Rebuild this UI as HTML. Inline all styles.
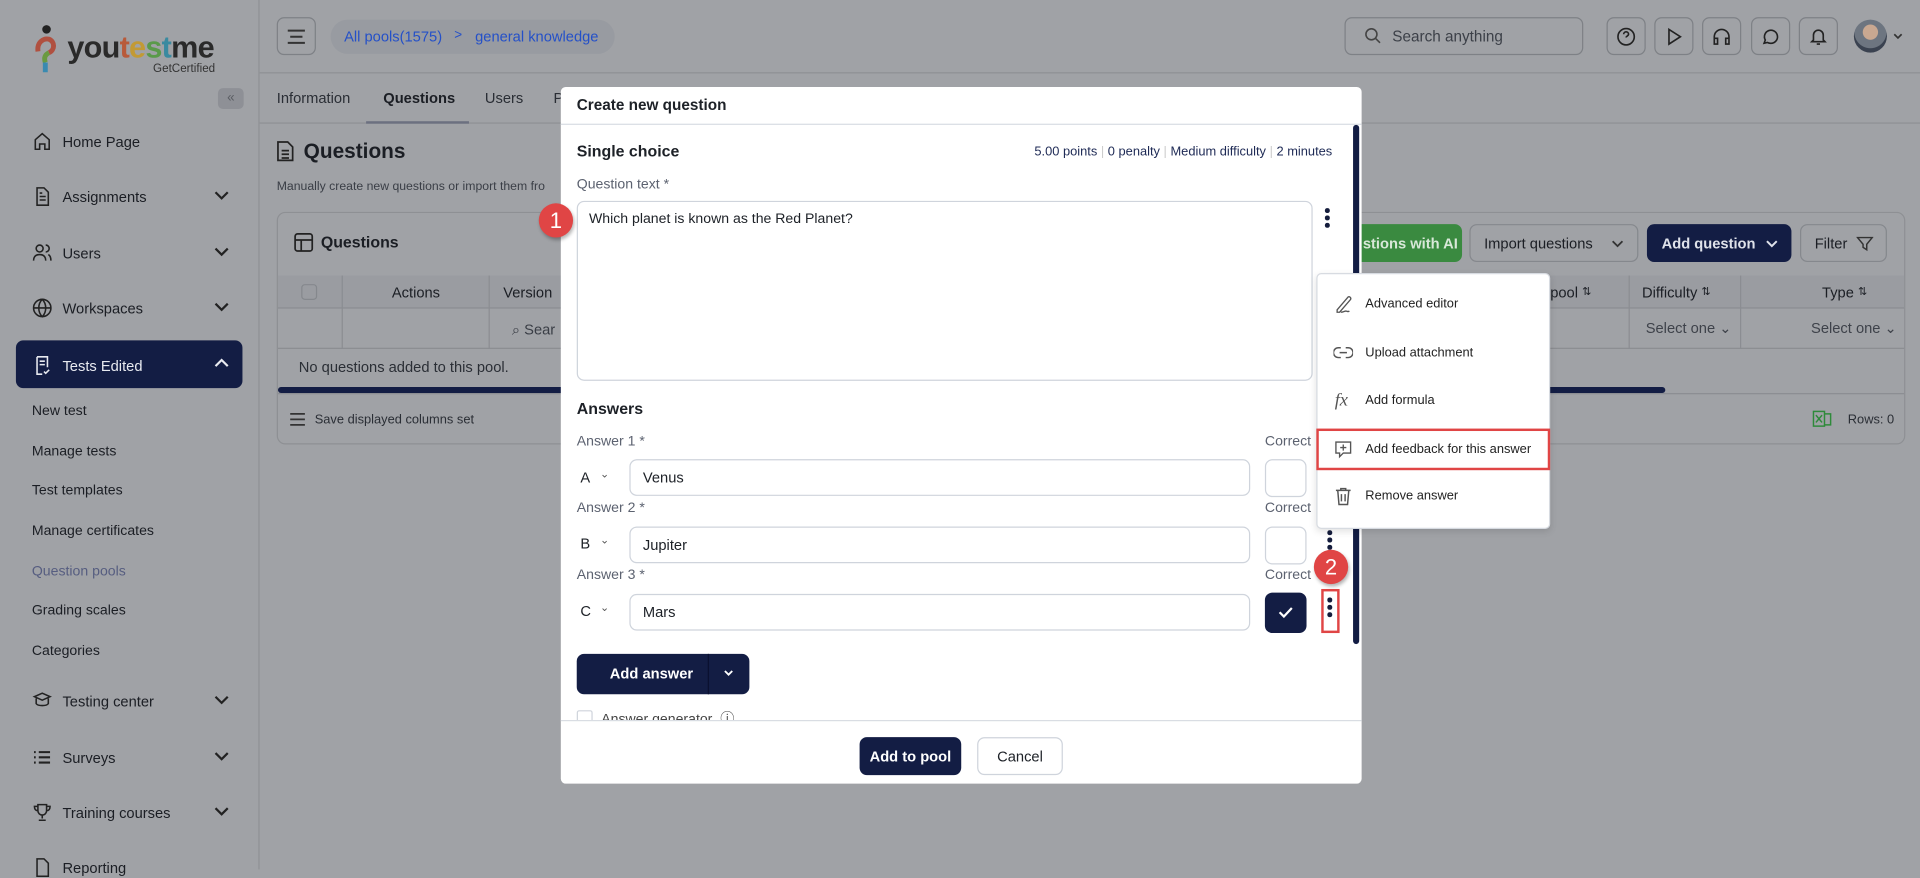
<!DOCTYPE html>
<html><head><meta charset="utf-8">
<style>
*{box-sizing:border-box;margin:0;padding:0}
html,body{width:1920px;height:869px;overflow:hidden;background:#a0a2a6;font-family:"Liberation Sans",Arial,sans-serif;color:#1d2127}
#w{position:absolute;left:0;top:0;width:1568px;height:710px;transform:scale(1.22449);transform-origin:0 0;background:#a0a2a6}
.a{position:absolute}
.nav{position:absolute;left:26px;font-size:12px;color:#1b1e24;display:flex;align-items:center}
.nav svg{margin-right:8px}
.sub{position:absolute;left:26px;font-size:11.5px;color:#1b1e24}
.chev{position:absolute;left:174px}
.ib{position:absolute;top:14px;width:32px;height:31px;border:1px solid #7e8186;border-radius:6px;display:flex;align-items:center;justify-content:center}
.btn{position:absolute;border-radius:6px;font-size:12px;display:flex;align-items:center}
.th{position:absolute;top:225px;height:27px;font-size:12px;display:flex;align-items:center;color:#1b1e24}
.lbl{position:absolute;font-size:11.5px;color:#5c6270}
.inp{position:absolute;border:1px solid #cfd4dc;border-radius:6px;background:#fff;font-size:12px;padding-left:10px;display:flex;align-items:center;color:#1d2127}
.cb{position:absolute;width:34px;height:31px;border:1px solid #cfd4dc;border-radius:6px;background:#fff}
.mi{position:absolute;left:1075px;width:191px;height:34px;display:flex;align-items:center;font-size:10.5px;color:#222}
.mi svg{position:absolute;left:14px}
.mi span{position:absolute;left:40px}
.badge{position:absolute;width:28px;height:28px;border-radius:50%;background:#e04545;color:#fff;font-size:18px;display:flex;align-items:center;justify-content:center;box-shadow:1px 2px 3px rgba(0,0,0,.3)}
.dots{position:absolute;width:4px}
.dots i{display:block;width:3.5px;height:3.5px;border-radius:50%;background:#141c3c;margin-bottom:2.5px}
</style></head><body><div id="w">

<div class="a" style="left:0;top:0;width:212px;height:710px;border-right:1px solid #8f9195;background:#a0a2a6"></div>
<svg class="a" style="left:28px;top:20px" width="20" height="42" viewBox="0 0 20 42"><circle cx="10" cy="4" r="3.5" fill="#222"/><path d="M3 22 C2 14 8 11 12 12 C17 14 17 21 12 23" stroke="#b05040" stroke-width="4" fill="none"/><path d="M12 23 C8 25 8 28 9 31" stroke="#6a9a40" stroke-width="4" fill="none"/><path d="M9 31 L9 39" stroke="#3a8ab0" stroke-width="4"/></svg>
<div class="a" style="left:55px;top:25px;font-size:25px;font-weight:bold;letter-spacing:-0.6px;color:#2a2a2a">you<span style="color:#b85a3a">t</span><span style="color:#c29a35">e</span><span style="color:#5a9a4a">s</span><span style="color:#3a8aa0">t</span>me</div>
<div class="a" style="left:125px;top:51px;font-size:9.5px;color:#333">GetCertified</div>
<div class="a" style="left:178px;top:72px;width:21px;height:17px;border-radius:4px;background:#8e9096;color:#5a5d63;font-size:11px;text-align:center;line-height:16px">«</div>

<div class="nav" style="top:107px"><svg width="17" height="17" viewBox="0 0 24 24" fill="none" stroke="#222" stroke-width="1.8"><path d="M4 21V10l8-7 8 7v11h-5v-6h-6v6z"/></svg>Home Page</div>
<div class="nav" style="top:152px"><svg width="17" height="17" viewBox="0 0 24 24" fill="none" stroke="#222" stroke-width="1.8"><path d="M6 2h8l5 5v15H6z M9 12h7 M9 16h7 M9 8h3"/></svg>Assignments</div>
<svg class="chev" style="top:154px" width="14" height="12" viewBox="0 0 14 12"><path d="M2 3l5 5 5-5" stroke="#222" stroke-width="1.8" fill="none"/></svg>
<div class="nav" style="top:198px"><svg width="17" height="17" viewBox="0 0 24 24" fill="none" stroke="#222" stroke-width="1.8"><circle cx="9" cy="7" r="4"/><path d="M2 21c0-5 3-7 7-7s7 2 7 7M16 3a4 4 0 010 8M19 14c2 1 3 3 3 7"/></svg>Users</div>
<svg class="chev" style="top:200px" width="14" height="12" viewBox="0 0 14 12"><path d="M2 3l5 5 5-5" stroke="#222" stroke-width="1.8" fill="none"/></svg>
<div class="nav" style="top:243px"><svg width="17" height="17" viewBox="0 0 24 24" fill="none" stroke="#222" stroke-width="1.8"><circle cx="12" cy="12" r="10"/><path d="M2 12h20M12 2c3 3 4 7 4 10s-1 7-4 10c-3-3-4-7-4-10s1-7 4-10"/></svg>Workspaces</div>
<svg class="chev" style="top:245px" width="14" height="12" viewBox="0 0 14 12"><path d="M2 3l5 5 5-5" stroke="#222" stroke-width="1.8" fill="none"/></svg>
<div class="a" style="left:13px;top:278px;width:185px;height:39px;border-radius:6px;background:#131d44"></div>
<div class="nav" style="top:290px;color:#e8eaf0"><svg width="17" height="17" viewBox="0 0 24 24" fill="none" stroke="#e8eaf0" stroke-width="1.8"><path d="M6 2h12v12M6 2v20h6M9 7h6M9 11h6M14 19l2 2 4-4"/></svg>Tests Edited</div>
<svg class="chev" style="top:291px" width="14" height="12" viewBox="0 0 14 12"><path d="M2 8l5-5 5 5" stroke="#e8eaf0" stroke-width="1.8" fill="none"/></svg>
<div class="sub" style="top:330px">New test</div>
<div class="sub" style="top:363px">Manage tests</div>
<div class="sub" style="top:395px">Test templates</div>
<div class="sub" style="top:428px">Manage certificates</div>
<div class="sub" style="top:461px;color:#565d80">Question pools</div>
<div class="sub" style="top:493px">Grading scales</div>
<div class="sub" style="top:526px">Categories</div>
<div class="nav" style="top:564px"><svg width="17" height="17" viewBox="0 0 24 24" fill="none" stroke="#222" stroke-width="1.8"><path d="M12 3l9 4-9 4-9-4z M5 9v6c2 3 12 3 14 0V9"/></svg>Testing center</div>
<svg class="chev" style="top:566px" width="14" height="12" viewBox="0 0 14 12"><path d="M2 3l5 5 5-5" stroke="#222" stroke-width="1.8" fill="none"/></svg>
<div class="nav" style="top:610px"><svg width="17" height="17" viewBox="0 0 24 24" fill="none" stroke="#222" stroke-width="2.4"><path d="M8 6h13M8 12h13M8 18h13M2.5 6h2M2.5 12h2M2.5 18h2"/></svg>Surveys</div>
<svg class="chev" style="top:612px" width="14" height="12" viewBox="0 0 14 12"><path d="M2 3l5 5 5-5" stroke="#222" stroke-width="1.8" fill="none"/></svg>
<div class="nav" style="top:655px"><svg width="17" height="17" viewBox="0 0 24 24" fill="none" stroke="#222" stroke-width="1.8"><path d="M7 3h10v7a5 5 0 01-10 0zM7 5H3c0 4 2 5 4 5M17 5h4c0 4-2 5-4 5M12 15v4M8 21h8"/></svg>Training courses</div>
<svg class="chev" style="top:657px" width="14" height="12" viewBox="0 0 14 12"><path d="M2 3l5 5 5-5" stroke="#222" stroke-width="1.8" fill="none"/></svg>
<div class="nav" style="top:700px"><svg width="17" height="17" viewBox="0 0 24 24" fill="none" stroke="#222" stroke-width="1.8"><path d="M6 2h8l5 5v15H6z"/></svg>Reporting</div>

<div class="a" style="left:212px;top:59px;width:1356px;height:1px;background:#8e9094"></div>
<div class="ib" style="left:226px"><svg width="16" height="14" viewBox="0 0 16 14"><path d="M1 2h14M3 7h10M1 12h14" stroke="#333" stroke-width="1.6"/></svg></div>
<div class="a" style="left:270px;top:16px;width:232px;height:28px;border-radius:14px;background:#989ba1"></div>
<div class="a" style="left:281px;top:23px;font-size:12px;color:#2450c8">All pools(1575)</div>
<div class="a" style="left:371px;top:23px;font-size:11px;color:#2450c8">&gt;</div>
<div class="a" style="left:388px;top:23px;font-size:12px;color:#2450c8">general knowledge</div>
<div class="a" style="left:1098px;top:14px;width:195px;height:31px;border:1px solid #7e8186;border-radius:6px"></div>
<svg class="a" style="left:1114px;top:22px" width="14" height="14" viewBox="0 0 14 14"><circle cx="6" cy="6" r="4.5" stroke="#444" stroke-width="1.3" fill="none"/><path d="M9.5 9.5L13 13" stroke="#444" stroke-width="1.3"/></svg>
<div class="a" style="left:1137px;top:23px;font-size:12.5px;color:#3c4048">Search anything</div>
<div class="ib" style="left:1312px"><svg width="16" height="16" viewBox="0 0 24 24" fill="none" stroke="#222" stroke-width="2"><circle cx="12" cy="12" r="10"/><path d="M9 9a3 3 0 116 0c0 2-3 2-3 4M12 17h.01"/></svg></div>
<div class="ib" style="left:1351px"><svg width="16" height="16" viewBox="0 0 24 24" fill="none" stroke="#222" stroke-width="2"><path d="M6 3l14 9-14 9z"/></svg></div>
<div class="ib" style="left:1390px"><svg width="16" height="16" viewBox="0 0 24 24" fill="none" stroke="#222" stroke-width="2"><path d="M3 18v-6a9 9 0 0118 0v6M3 14h4v7H3zM17 14h4v7h-4z"/></svg></div>
<div class="ib" style="left:1430px"><svg width="16" height="16" viewBox="0 0 24 24" fill="none" stroke="#222" stroke-width="2"><path d="M4 20l1.5-4A8 8 0 1112 20a8 8 0 01-4-1z"/></svg></div>
<div class="ib" style="left:1469px"><svg width="16" height="16" viewBox="0 0 24 24" fill="none" stroke="#222" stroke-width="2"><path d="M6 16V10a6 6 0 0112 0v6l2 2H4zM10 21h4"/></svg></div>
<div class="a" style="left:1514px;top:16px;width:27px;height:27px;border-radius:50%;background:radial-gradient(circle at 50% 38%,#c9a891 0 28%,#6d7580 30% 60%,#3a4250 62%)"></div>
<svg class="a" style="left:1545px;top:26px" width="10" height="8" viewBox="0 0 10 8"><path d="M2 2l3 3 3-3" stroke="#333" stroke-width="1.4" fill="none"/></svg>

<div class="a" style="left:212px;top:100px;width:1356px;height:1px;background:#8e9094"></div>
<div class="a" style="left:226px;top:73px;font-size:12px;color:#2a2e35">Information</div>
<div class="a" style="left:313px;top:73px;font-size:12px;font-weight:bold;color:#1b1e24">Questions</div>
<div class="a" style="left:299px;top:99px;width:84px;height:2px;background:#6c7080"></div>
<div class="a" style="left:396px;top:73px;font-size:12px;color:#2a2e35">Users</div>
<div class="a" style="left:452px;top:73px;font-size:12px;color:#2a2e35">P</div>

<svg class="a" style="left:226px;top:115px" width="14" height="17" viewBox="0 0 14 17" fill="none" stroke="#222" stroke-width="1.4"><path d="M1 1h8l4 4v11H1z M4 8h6M4 11h6M4 14h6"/></svg>
<div class="a" style="left:248px;top:114px;font-size:17px;font-weight:bold;color:#1b1e24">Questions</div>
<div class="a" style="left:226px;top:147px;font-size:10px;color:#3a3e46">Manually create new questions or import them fro</div>

<div class="a" style="left:226px;top:173px;width:1330px;height:190px;border:1px solid #8e9094;border-radius:7px"></div>
<svg class="a" style="left:240px;top:190px" width="16" height="16" viewBox="0 0 16 16" fill="none" stroke="#222" stroke-width="1.4"><rect x="1" y="1" width="14" height="14" rx="2"/><path d="M1 6h14M6 6v9"/></svg>
<div class="a" style="left:262px;top:190px;font-size:13px;font-weight:bold;color:#1b1e24">Questions</div>
<div class="btn" style="left:1085px;top:183px;width:109px;height:31px;background:#3a8a40;color:#d8e8d8;padding-left:28px;font-weight:bold">stions with AI</div>
<div class="btn" style="left:1200px;top:183px;width:138px;height:31px;border:1px solid #85888d;padding-left:11px;color:#1b1e24">Import questions<svg style="position:absolute;right:10px" width="12" height="10" viewBox="0 0 12 10"><path d="M2 3l4 4 4-4" stroke="#333" stroke-width="1.5" fill="none"/></svg></div>
<div class="btn" style="left:1345px;top:183px;width:118px;height:31px;background:#131d44;color:#dfe2ea;padding-left:12px;font-weight:bold">Add question<svg style="position:absolute;right:10px" width="12" height="10" viewBox="0 0 12 10"><path d="M2 3l4 4 4-4" stroke="#dfe2ea" stroke-width="1.6" fill="none"/></svg></div>
<div class="btn" style="left:1470px;top:183px;width:71px;height:31px;border:1px solid #85888d;padding-left:11px;color:#1b1e24">Filter<svg style="position:absolute;right:10px" width="14" height="14" viewBox="0 0 14 14"><path d="M1 2h12L8.5 7.5V12L5.5 10V7.5z" stroke="#333" stroke-width="1.2" fill="none"/></svg></div>
<div class="a" style="left:227px;top:225px;width:1328px;height:27px;background:#9a9ca1;border-bottom:1px solid #8b8d92"></div>
<div class="a" style="left:227px;top:252px;width:1328px;height:33px;border-bottom:1px solid #8b8d92"></div>
<div class="a" style="left:279px;top:225px;width:1px;height:60px;background:#8b8d92"></div>
<div class="a" style="left:399px;top:225px;width:1px;height:60px;background:#8b8d92"></div>
<div class="a" style="left:1330px;top:225px;width:1px;height:60px;background:#8b8d92"></div>
<div class="a" style="left:1421px;top:225px;width:1px;height:60px;background:#8b8d92"></div>
<div class="a" style="left:246px;top:232px;width:13px;height:13px;border:1px solid #85888d;border-radius:3px"></div>
<div class="th" style="left:320px">Actions</div>
<div class="th" style="left:411px">Version</div>
<div class="th" style="left:1266px">pool&nbsp;<span style="font-size:9px">⇅</span></div>
<div class="th" style="left:1341px">Difficulty&nbsp;<span style="font-size:9px">⇅</span></div>
<div class="th" style="left:1488px">Type&nbsp;<span style="font-size:9px">⇅</span></div>
<div class="a" style="left:418px;top:262px;font-size:12px;color:#3a3e46">⌕ Sear</div>
<div class="a" style="left:1344px;top:261px;font-size:12px;color:#3e424a">Select one ⌄</div>
<div class="a" style="left:1479px;top:261px;font-size:12px;color:#3e424a">Select one ⌄</div>
<div class="a" style="left:244px;top:293px;font-size:12px;color:#2a2e35">No questions added to this pool.</div>
<div class="a" style="left:227px;top:316px;width:1133px;height:5px;border-radius:3px;background:#131d44"></div>
<div class="a" style="left:227px;top:321px;width:1328px;height:1px;background:#8b8d92"></div>
<svg class="a" style="left:236px;top:337px" width="14" height="11" viewBox="0 0 14 11"><path d="M1 1h12M1 5.5h12M1 10h12" stroke="#333" stroke-width="1.4"/></svg>
<div class="a" style="left:257px;top:337px;font-size:10.5px;color:#2a2e35">Save displayed columns set</div>
<svg class="a" style="left:1480px;top:334px" width="16" height="16" viewBox="0 0 16 16" fill="none" stroke="#2e8a3a" stroke-width="1.2"><rect x="1" y="2" width="9" height="12"/><path d="M10 4h5v9h-5M3 5l5 6M8 5l-5 6"/></svg>
<div class="a" style="left:1509px;top:337px;font-size:10.5px;color:#2a2e35">Rows: 0</div>

<div class="a" style="left:458px;top:71px;width:654px;height:569px;background:#fff;border-radius:4px"></div>
<div class="a" style="left:471px;top:79px;font-size:12.5px;font-weight:bold;color:#1d2127">Create new question</div>
<div class="a" style="left:458px;top:101px;width:654px;height:1px;background:#d9dde3"></div>
<div class="a" style="left:1105px;top:102px;width:5px;height:424px;border-radius:3px;background:#131d44"></div>
<div class="a" style="left:471px;top:116px;font-size:13px;font-weight:bold;color:#1d2127">Single choice</div>
<div class="a" style="right:480px;top:118px;font-size:10.5px;color:#1e2a55;white-space:nowrap">5.00 points <span style="color:#ccc">|</span> 0 penalty <span style="color:#ccc">|</span> Medium difficulty <span style="color:#ccc">|</span> 2 minutes</div>
<div class="lbl" style="left:471px;top:145px">Question text *</div>
<div class="a" style="left:471px;top:164px;width:601px;height:147px;border:1px solid #cfd4dc;border-radius:6px"></div>
<div class="a" style="left:481px;top:173px;font-size:11.5px;color:#1d2127">Which planet is known as the Red Planet?</div>
<div class="dots" style="left:1082px;top:170px"><i></i><i></i><i></i></div>
<div class="a" style="left:471px;top:326px;font-size:13px;font-weight:bold;color:#1d2127">Answers</div>

<div class="lbl" style="left:471px;top:355px">Answer 1 *</div>
<div class="lbl" style="left:1033px;top:355px">Correct</div>
<div class="a" style="left:474px;top:383px;font-size:12px">A</div><div class="a" style="left:490px;top:382px;font-size:9px;color:#555">⌄</div>
<div class="inp" style="left:514px;top:375px;width:507px;height:30px">Venus</div>
<div class="cb" style="left:1033px;top:375px"></div>

<div class="lbl" style="left:471px;top:409px">Answer 2 *</div>
<div class="lbl" style="left:1033px;top:409px">Correct</div>
<div class="a" style="left:474px;top:437px;font-size:12px">B</div><div class="a" style="left:490px;top:436px;font-size:9px;color:#555">⌄</div>
<div class="inp" style="left:514px;top:430px;width:507px;height:30px">Jupiter</div>
<div class="cb" style="left:1033px;top:430px"></div>
<div class="dots" style="left:1084px;top:433px"><i></i><i></i><i></i></div>

<div class="lbl" style="left:471px;top:464px">Answer 3 *</div>
<div class="lbl" style="left:1033px;top:464px">Correct</div>
<div class="a" style="left:474px;top:492px;font-size:12px">C</div><div class="a" style="left:490px;top:491px;font-size:9px;color:#555">⌄</div>
<div class="inp" style="left:514px;top:485px;width:507px;height:30px">Mars</div>
<div class="a" style="left:1033px;top:484px;width:34px;height:33px;border-radius:6px;background:#131d44"></div>
<svg class="a" style="left:1043px;top:494px" width="14" height="12" viewBox="0 0 14 12"><path d="M2 6l3.5 3.5L12 2.5" stroke="#fff" stroke-width="1.8" fill="none"/></svg>
<div class="dots" style="left:1084px;top:488px"><i></i><i></i><i></i></div>
<div class="a" style="left:1079px;top:481px;width:15px;height:36px;border:2px solid #e04545"></div>
<div class="badge" style="left:1073px;top:449px">2</div>
<div class="badge" style="left:440px;top:166px">1</div>

<div class="a" style="left:471px;top:534px;width:141px;height:33px;border-radius:6px;background:#131d44"></div>
<div class="a" style="left:578px;top:534px;width:1px;height:33px;background:#0a1030"></div>
<div class="a" style="left:498px;top:543px;font-size:12px;font-weight:bold;color:#fff">Add answer</div>
<svg class="a" style="left:590px;top:546px" width="10" height="8" viewBox="0 0 10 8"><path d="M2 2l3 3 3-3" stroke="#fff" stroke-width="1.5" fill="none"/></svg>
<div class="a" style="left:458px;top:576px;width:647px;height:12px;overflow:hidden"><div style="position:absolute;left:13px;top:4px;width:13px;height:13px;border:1px solid #cfd4dc;border-radius:2px"></div><div style="position:absolute;left:33px;top:3px;font-size:11.5px;color:#444">Answer generator &nbsp;ⓘ</div></div>
<div class="a" style="left:458px;top:588px;width:654px;height:1px;background:#d9dde3"></div>
<div class="a" style="left:702px;top:602px;width:83px;height:31px;border-radius:6px;background:#131d44;color:#fff;font-size:12px;font-weight:bold;display:flex;align-items:center;justify-content:center">Add to pool</div>
<div class="a" style="left:798px;top:602px;width:70px;height:31px;border-radius:6px;border:1px solid #cfd4dc;color:#1d2127;font-size:12px;display:flex;align-items:center;justify-content:center">Cancel</div>

<div class="a" style="left:1075px;top:223px;width:191px;height:209px;background:#fff;border:1px solid #d7dbe1;border-radius:4px;box-shadow:0 2px 6px rgba(0,0,0,.12)"></div>
<div class="mi" style="top:231px"><svg width="16" height="16" viewBox="0 0 16 16" fill="none" stroke="#555" stroke-width="1.1"><path d="M3 13L12 2.5a1.5 1.5 0 012 2L5 15H3z M6 15c2 0 3-1 4-1s1.5 1 3 0"/></svg><span>Advanced editor</span></div>
<div class="mi" style="top:271px"><svg width="16" height="16" viewBox="0 0 16 16" fill="none" stroke="#555" stroke-width="1.2"><path d="M6 4H4a4 4 0 000 8h2M10 4h2a4 4 0 010 8h-2M5 8h6"/></svg><span>Upload attachment</span></div>
<div class="mi" style="top:310px"><span style="left:15px;font-family:'Liberation Serif',serif;font-style:italic;font-size:15px;color:#555">fx</span><span>Add formula</span></div>
<div class="mi" style="top:350px;border:2px solid #e04545"><svg width="16" height="16" viewBox="0 0 16 16" fill="none" stroke="#555" stroke-width="1.1" style="left:12px"><path d="M2 2h12v9H8l-3 3v-3H2z M8 4v5M5.5 6.5h5"/></svg><span style="left:38px">Add feedback for this answer</span></div>
<div class="mi" style="top:388px"><svg width="16" height="16" viewBox="0 0 16 16" fill="none" stroke="#555" stroke-width="1.2"><path d="M2 3.5h12M6 3.5V2h4v1.5M3.5 3.5L4.5 15h7l1-11.5M6.5 6.5v6M9.5 6.5v6"/></svg><span>Remove answer</span></div>

</div></body></html>
